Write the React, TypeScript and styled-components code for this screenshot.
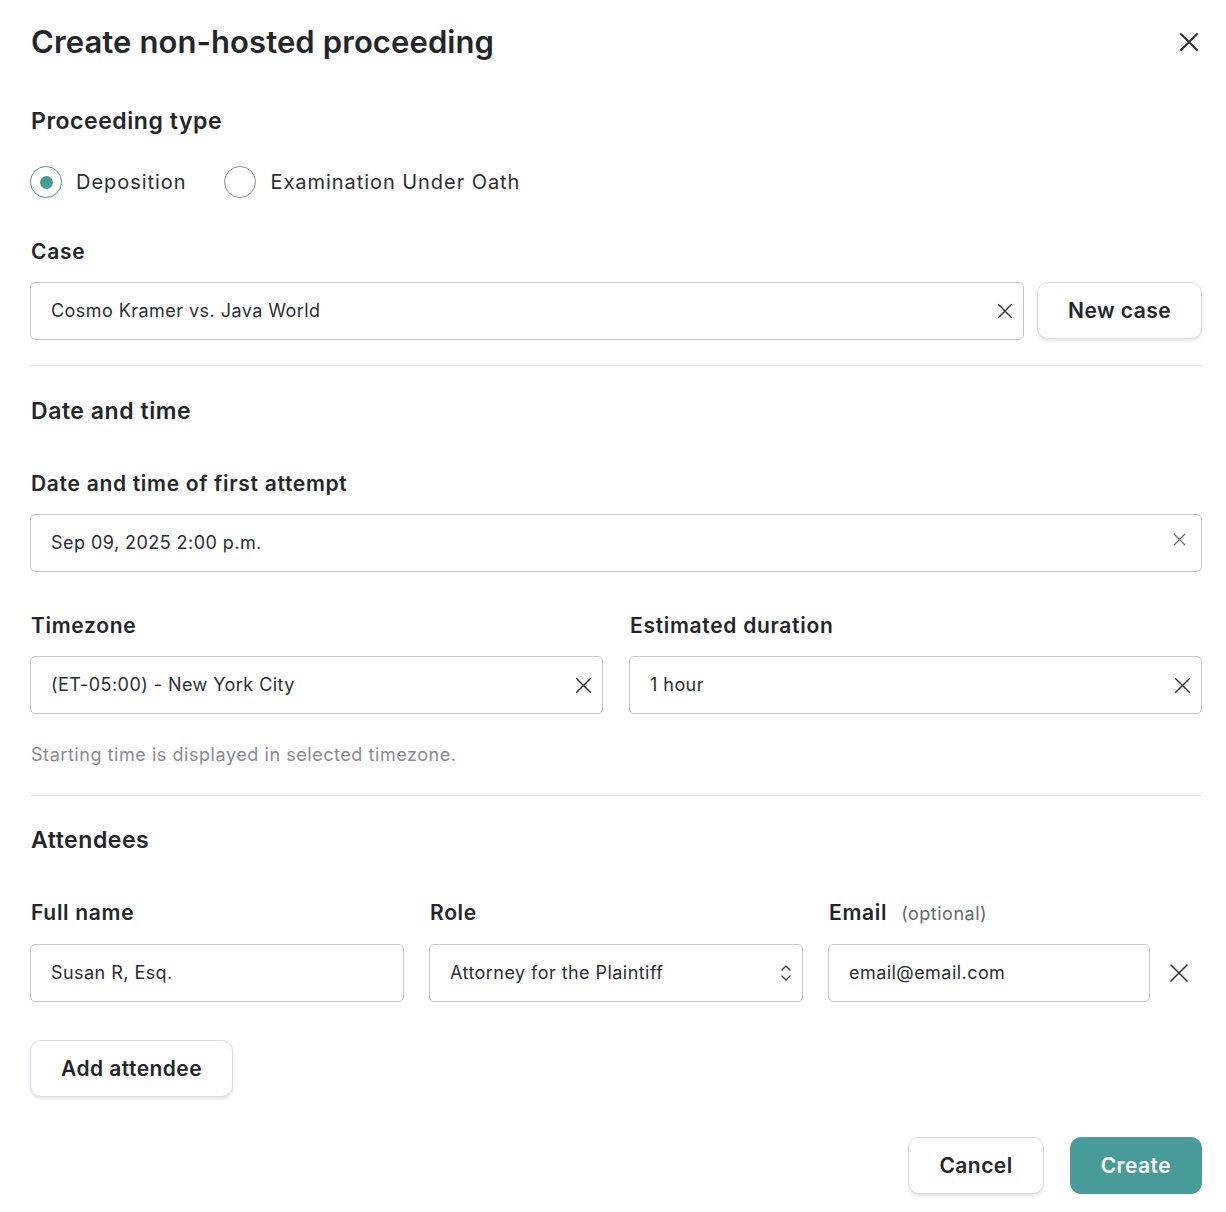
import styled, { createGlobalStyle } from "styled-components";

const GlobalStyle = createGlobalStyle`
  body {
    margin: 0;
    background: #fff;
    font-family: Inter, "Noto Sans", sans-serif;
    color: #22262a;
  }
  * { box-sizing: border-box; }
`;

const CloseIcon = ({ size = 18, stroke = 2, color = "#2b2f33" }: { size?: number; stroke?: number; color?: string }) => (
  <svg width={size} height={size} viewBox="0 0 20 20" fill="none">
    <path d="M2 2L18 18M18 2L2 18" stroke={color} strokeWidth={stroke} strokeLinecap="round" />
  </svg>
);

const Chevrons = () => (
  <svg width="12" height="20" viewBox="0 0 12 20" fill="none">
    <path d="M2 7L6 3L10 7M2 13L6 17L10 13" stroke="#3b4046" strokeWidth="1.4" strokeLinecap="round" strokeLinejoin="round" />
  </svg>
);

const App = () => {
  return (
    <>
      <GlobalStyle />
      <Dialog>
        <TitleRow>
          <Title>Create non-hosted proceeding</Title>
          <IconButton><CloseIcon size={20} stroke={2} /></IconButton>
        </TitleRow>

        <SectionTitle $top={43}>Proceeding type</SectionTitle>
        <RadioRow>
          <RadioOption>
            <Radio $checked />
            Deposition
          </RadioOption>
          <RadioOption>
            <Radio />
            Examination Under Oath
          </RadioOption>
        </RadioRow>

        <Label $top={40}>Case</Label>
        <CaseRow>
          <Field>
            <FieldText>Cosmo Kramer vs. Java World</FieldText>
            <CloseIcon size={16} stroke={1.8} color="#33383d" />
          </Field>
          <Button>New case</Button>
        </CaseRow>

        <Divider $top={25} />

        <SectionTitle $top={29}>Date and time</SectionTitle>
        <Label $top={43}>Date and time of first attempt</Label>
        <Field $clearTop>
          <FieldText>Sep 09, 2025 2:00 p.m.</FieldText>
          <CloseIcon size={13} stroke={2} color="#6b7075" />
        </Field>

        <TwoCols>
          <div>
            <Label $top={0}>Timezone</Label>
            <Field>
              <FieldText>(ET-05:00) - New York City</FieldText>
              <CloseIcon size={17} stroke={1.7} color="#2b2f33" />
            </Field>
          </div>
          <div>
            <Label $top={0}>Estimated duration</Label>
            <Field>
              <FieldText>1 hour</FieldText>
              <CloseIcon size={17} stroke={1.7} color="#2b2f33" />
            </Field>
          </div>
        </TwoCols>

        <Hint>Starting time is displayed in selected timezone.</Hint>

        <Divider $top={28} />

        <SectionTitle $top={28}>Attendees</SectionTitle>
        <AttendeeGrid>
          <Label $top={0}>Full name</Label>
          <Label $top={0}>Role</Label>
          <Label $top={0}>
            Email <Optional>(optional)</Optional>
          </Label>
          <Field>
            <FieldText>Susan R, Esq.</FieldText>
          </Field>
          <Field>
            <FieldText>Attorney for the Plaintiff</FieldText>
            <Chevrons />
          </Field>
          <Field>
            <FieldText>email@email.com</FieldText>
          </Field>
          <RemoveCell>
            <CloseIcon size={20} stroke={1.5} color="#2b2f33" />
          </RemoveCell>
        </AttendeeGrid>

        <AddRow>
          <Button>Add attendee</Button>
        </AddRow>

        <Footer>
          <Button>Cancel</Button>
          <Button $primary>Create</Button>
        </Footer>
      </Dialog>
    </>
  );
};

const Dialog = styled.div`
  width: 1226px;
  padding: 22px 24px 19px 30px;
`;

const TitleRow = styled.div`
  display: flex;
  align-items: center;
  justify-content: space-between;
  height: 40px;
`;

const Title = styled.h1`
  margin: 0 0 0 1px;
  font-size: 31px;
  line-height: 40px;
  font-weight: 600;
  letter-spacing: 0.1px;
`;

const IconButton = styled.div`
  display: flex;
  align-items: center;
  justify-content: center;
  width: 28px;
  height: 28px;
  margin-right: -1px;
`;

const SectionTitle = styled.h2<{ $top: number }>`
  margin: ${(p) => p.$top}px 0 0 1px;
  font-size: 23px;
  line-height: 32px;
  font-weight: 600;
  letter-spacing: 0.55px;
`;

const Label = styled.div<{ $top: number }>`
  margin: ${(p) => p.$top}px 0 16px 1px;
  font-size: 21px;
  line-height: 28px;
  font-weight: 600;
  letter-spacing: 0.7px;
  display: flex;
  align-items: baseline;
  gap: 14px;
`;

const Optional = styled.span`
  font-size: 18px;
  font-weight: 400;
  letter-spacing: 0.5px;
  color: #656a70;
`;

const RadioRow = styled.div`
  display: flex;
  gap: 38px;
  margin-top: 29px;
`;

const RadioOption = styled.label`
  display: flex;
  align-items: center;
  gap: 14px;
  font-size: 20px;
  line-height: 32px;
  letter-spacing: 0.95px;
  color: #2a2e33;
`;

const Radio = styled.span<{ $checked?: boolean }>`
  width: 32px;
  height: 32px;
  border-radius: 50%;
  border: 1px solid ${(p) => (p.$checked ? "#479c99" : "#8b9096")};
  display: flex;
  align-items: center;
  justify-content: center;

  &::after {
    content: "";
    width: 13px;
    height: 13px;
    border-radius: 50%;
    background: #479c99;
    display: ${(p) => (p.$checked ? "block" : "none")};
  }
`;

const CaseRow = styled.div`
  display: flex;
  gap: 13px;

  & > :first-child {
    flex: 1;
  }
`;

const Field = styled.div<{ $clearTop?: boolean }>`
  height: 58px;
  border: 1px solid #c6c9ce;
  border-radius: 5px;
  display: flex;
  align-items: ${(p) => (p.$clearTop ? "flex-start" : "center")};
  padding: 0 10px 0 20px;
  gap: 10px;

  & > svg {
    flex-shrink: 0;
    margin-top: ${(p) => (p.$clearTop ? "18px" : "0")};
    margin-right: ${(p) => (p.$clearTop ? "5px" : "0")};
  }
`;

const FieldText = styled.span`
  flex: 1;
  font-size: 18px;
  line-height: 56px;
  color: #2a2e33;
  letter-spacing: 0.45px;
  white-space: nowrap;
`;

const Button = styled.button<{ $primary?: boolean }>`
  font-family: Inter, "Noto Sans", sans-serif;
  font-size: 21px;
  font-weight: 600;
  letter-spacing: 0.45px;
  height: 57px;
  padding: 0 30px;
  border-radius: 11px;
  border: 1px solid ${(p) => (p.$primary ? "#479c99" : "#dcdde3")};
  background: ${(p) => (p.$primary ? "#479c99" : "#fff")};
  color: ${(p) => (p.$primary ? "#fff" : "#22262a")};
  box-shadow: ${(p) => (p.$primary ? "none" : "0 2px 3px rgba(30, 35, 60, 0.12)")};
  cursor: pointer;
`;

const Divider = styled.hr<{ $top: number }>`
  border: 0;
  border-top: 1px solid #e3e4e7;
  margin: ${(p) => p.$top}px 0 0;
`;

const TwoCols = styled.div`
  display: grid;
  grid-template-columns: 1fr 1fr;
  gap: 26px;
  margin-top: 40px;
`;

const Hint = styled.div`
  margin: 29px 0 0 1px;
  font-size: 18px;
  line-height: 24px;
  letter-spacing: 0.55px;
  color: #878c93;
`;

const AttendeeGrid = styled.div`
  display: grid;
  grid-template-columns: 374px 374px 322px 1fr;
  column-gap: 25px;
  margin-top: 43px;

  & > :nth-child(3) {
    grid-column: 3 / 5;
  }
`;

const RemoveCell = styled.div`
  display: flex;
  align-items: center;
  justify-content: center;
  margin-left: -25px;
  padding-left: 6px;
`;

const AddRow = styled.div`
  margin-top: 38px;
  display: flex;
`;

const Footer = styled.div`
  margin-top: 40px;
  display: flex;
  justify-content: flex-end;
  gap: 26px;
`;

export default App;
